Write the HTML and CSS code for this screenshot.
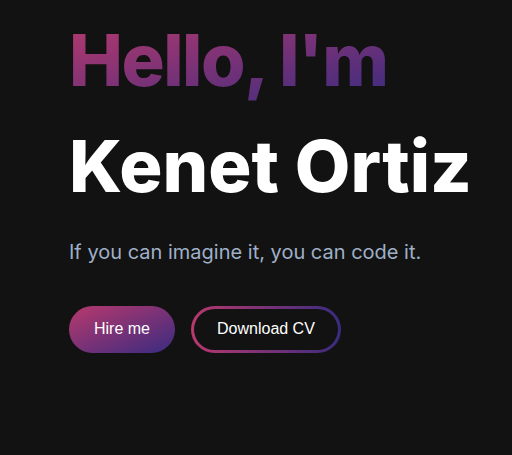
FILE: index.html
```html
<!DOCTYPE html>
<html lang="en">
<head>
<meta charset="utf-8">
<title>Kenet Ortiz</title>
<link rel="stylesheet" href="styles.css">
</head>
<body>
<main class="hero">
  <h2 class="hello">Hello, I'm</h2>
  <h1 class="name">Kenet Ortiz</h1>
  <p class="tagline">If you can imagine it, you can code it.</p>
  <div class="actions">
    <a class="btn btn-primary" href="#">Hire me</a>
    <a class="btn btn-outline" href="#">Download CV</a>
  </div>
</main>
</body>
</html>
```

FILE: styles.css
```css
html, body {
  margin: 0;
  padding: 0;
  background: #121212;
  height: 100%;
}
.hero {
  padding: 17px 0 0 69px;
  display: flex;
  flex-direction: column;
  align-items: flex-start;
}
.hello {
  margin: 0;
  font-family: Inter, sans-serif;
  font-weight: 800;
  font-size: 72px;
  line-height: 1.2;
  letter-spacing: -1.5px;
  background: linear-gradient(to bottom right, #b8396d, #3a2b80);
  -webkit-background-clip: text;
  background-clip: text;
  color: transparent;
}
.name {
  margin: 20px 0 0;
  font-family: Inter, sans-serif;
  font-weight: 800;
  font-size: 72px;
  line-height: 1.2;
  color: #ffffff;
  letter-spacing: 0;
}
.tagline {
  margin: 27px 0 0;
  font-family: Inter, sans-serif;
  font-size: 20px;
  line-height: 1.5;
  color: #9fb0c8;
}
.actions {
  margin-top: 39px;
  display: flex;
  gap: 16px;
}
.btn {
  display: flex;
  align-items: center;
  height: 47px;
  box-sizing: border-box;
  border-radius: 999px;
  font-family: "Liberation Sans", Arial, sans-serif;
  font-size: 16px;
  color: #ffffff;
  text-decoration: none;
}
.btn-primary {
  padding: 0 25px;
  background: linear-gradient(to bottom right, #b8396d, #3a2b80);
}
.btn-outline {
  padding: 0 23px;
  border: 3px solid transparent;
  background:
    linear-gradient(#121212, #121212) padding-box,
    linear-gradient(to right, #b8396d, #3a2b80) border-box;
}
```
